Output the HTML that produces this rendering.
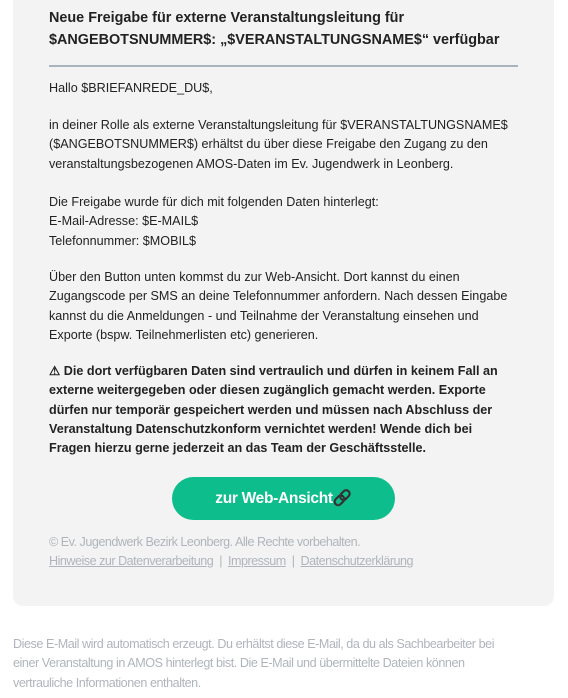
<!DOCTYPE html>
<html><head><meta charset="utf-8"><style>
body{margin:0;background:#fff;font-family:"Liberation Sans",Arial,sans-serif;width:568px;height:698px;position:relative;overflow:hidden;color:#222}
.card{position:absolute;left:13px;top:-10px;width:541px;height:616px;background:#f3f3f3;border-radius:0 0 10px 10px}
.t{position:absolute;left:49px;font-size:12.6px;line-height:19.3px;margin:0}
h1{position:absolute;left:49px;top:7px;margin:0;font-size:14.4px;line-height:22px;font-weight:bold;color:#222}
.hr{position:absolute;left:49px;top:65px;width:469px;height:2px;background:#a9b3bd}
.btn{position:absolute;left:172px;top:477px;width:223px;height:43px;border-radius:22px;background:#0dbd8b;color:#fff;font-weight:bold;font-size:15.5px;line-height:43px;text-align:center;letter-spacing:-0.3px}
.btn span{color:#000;filter:grayscale(1) brightness(0.3)}
.f{color:#b0b5bb;letter-spacing:-0.5px}
.f a{color:#b0b5bb;text-decoration:underline}
</style></head><body>
<div class="card"></div>
<h1>Neue Freigabe für externe Veranstaltungsleitung für<br>$ANGEBOTSNUMMER$: „$VERANSTALTUNGSNAME$“ verfügbar</h1>
<div class="hr"></div>
<p class="t" style="top:79px">Hallo $BRIEFANREDE_DU$,</p>
<p class="t" style="top:116px">in deiner Rolle als externe Veranstaltungsleitung für $VERANSTALTUNGSNAME$<br>($ANGEBOTSNUMMER$) erhältst du über diese Freigabe den Zugang zu den<br>veranstaltungsbezogenen AMOS-Daten im Ev. Jugendwerk in Leonberg.</p>
<p class="t" style="top:193px">Die Freigabe wurde für dich mit folgenden Daten hinterlegt:<br>E-Mail-Adresse: $E-MAIL$<br>Telefonnummer: $MOBIL$</p>
<p class="t" style="top:268px">Über den Button unten kommst du zur Web-Ansicht. Dort kannst du einen<br>Zugangscode per SMS an deine Telefonnummer anfordern. Nach dessen Eingabe<br>kannst du die Anmeldungen - und Teilnahme der Veranstaltung einsehen und<br>Exporte (bspw. Teilnehmerlisten etc) generieren.</p>
<p class="t" style="top:362px;font-weight:bold">⚠ Die dort verfügbaren Daten sind vertraulich und dürfen in keinem Fall an<br>externe weitergegeben oder diesen zugänglich gemacht werden. Exporte<br>dürfen nur temporär gespeichert werden und müssen nach Abschluss der<br>Veranstaltung Datenschutzkonform vernichtet werden! Wende dich bei<br>Fragen hierzu gerne jederzeit an das Team der Geschäftsstelle.</p>
<div class="btn">zur Web-Ansicht<span>🔗</span></div>
<p class="t f" style="top:533px">© Ev. Jugendwerk Bezirk Leonberg. Alle Rechte vorbehalten.<br><a>Hinweise zur Datenverarbeitung</a> &nbsp;| &nbsp;<a>Impressum</a> &nbsp;| &nbsp;<a>Datenschutzerklärung</a></p>
<p class="t f" style="left:13px;top:635px;letter-spacing:-0.45px">Diese E-Mail wird automatisch erzeugt. Du erhältst diese E-Mail, da du als Sachbearbeiter bei<br>einer Veranstaltung in AMOS hinterlegt bist. Die E-Mail und übermittelte Dateien können<br>vertrauliche Informationen enthalten.</p>
</body></html>
